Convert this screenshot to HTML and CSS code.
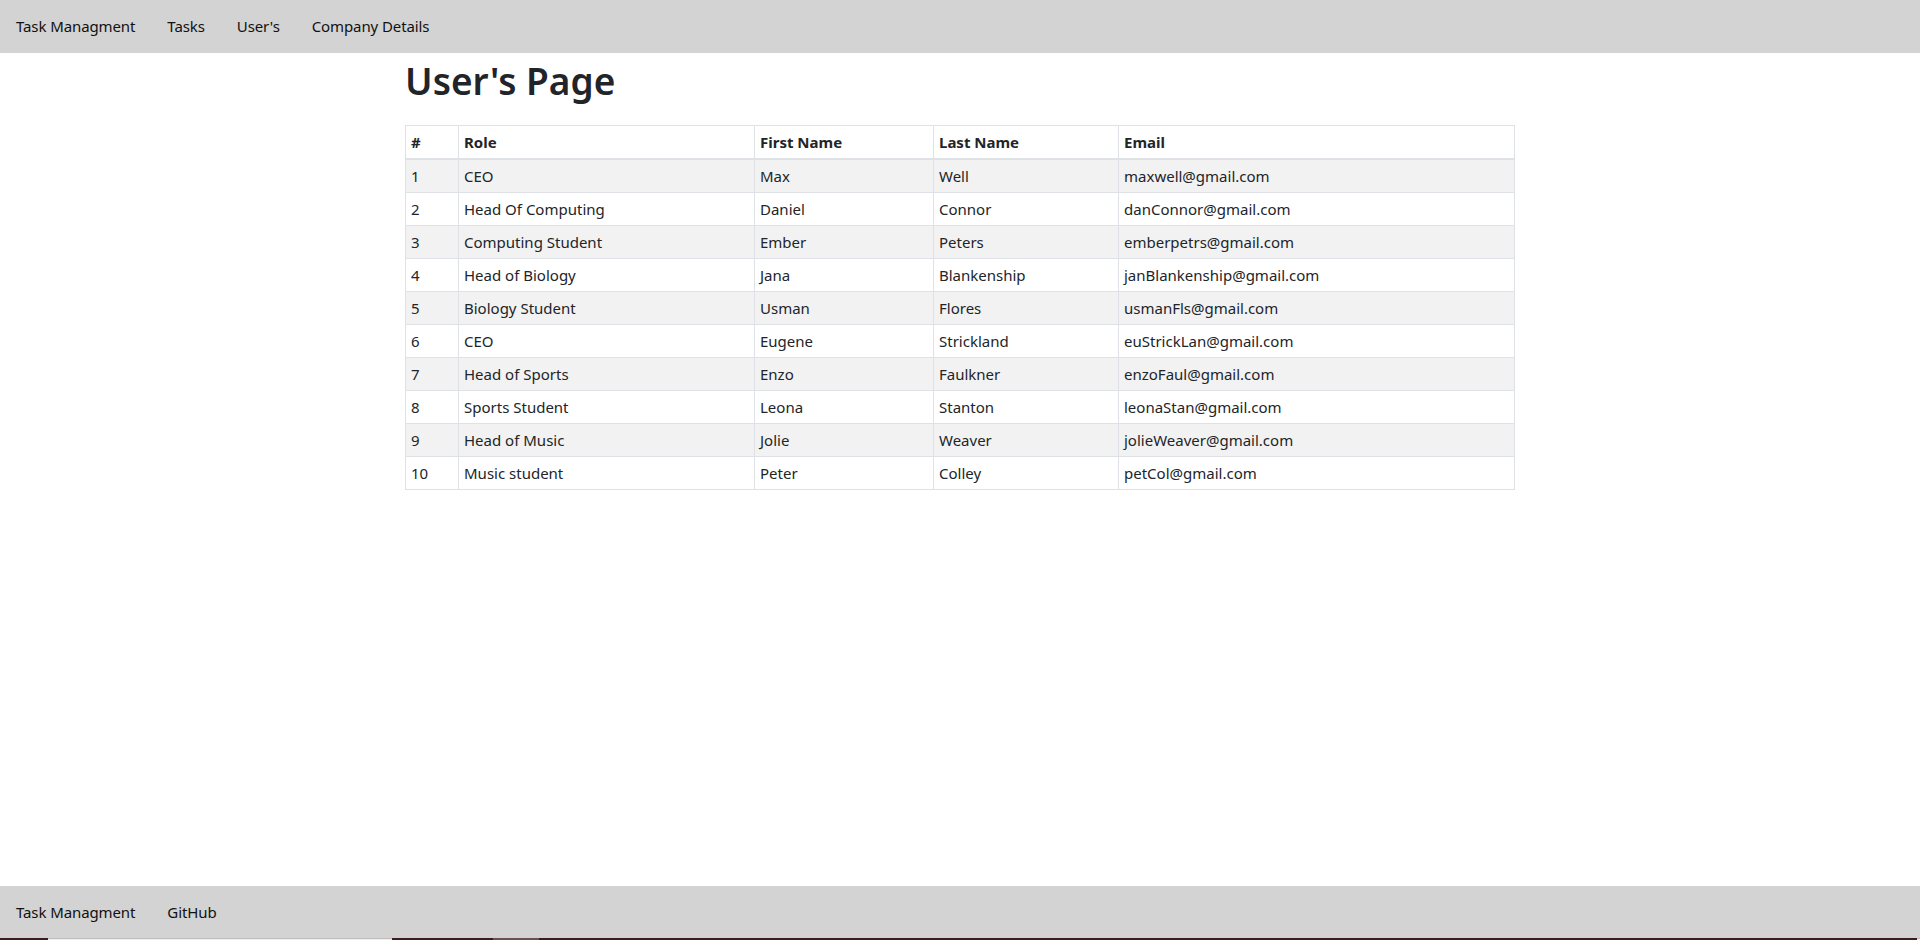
FILE: index.html
```html
<!DOCTYPE html>
<html lang="en">
<head>
<meta charset="utf-8">
<title>User's Page</title>
<link rel="stylesheet" href="styles.css">
</head>
<body>
<header class="topnav">
  <a class="nav-link" href="#">Task Managment</a>
  <a class="nav-link" href="#">Tasks</a>
  <a class="nav-link" href="#">User's</a>
  <a class="nav-link" href="#">Company Details</a>
</header>
<main class="container">
  <h1 class="page-title">User's Page</h1>
  <table class="users-table">
    <thead>
      <tr>
        <th class="col-num">#</th>
        <th class="col-role">Role</th>
        <th class="col-first">First Name</th>
        <th class="col-last">Last Name</th>
        <th class="col-email">Email</th>
      </tr>
    </thead>
    <tbody>
      <tr><td>1</td><td>CEO</td><td>Max</td><td>Well</td><td>maxwell@gmail.com</td></tr>
      <tr><td>2</td><td>Head Of Computing</td><td>Daniel</td><td>Connor</td><td>danConnor@gmail.com</td></tr>
      <tr><td>3</td><td>Computing Student</td><td>Ember</td><td>Peters</td><td>emberpetrs@gmail.com</td></tr>
      <tr><td>4</td><td>Head of Biology</td><td>Jana</td><td>Blankenship</td><td>janBlankenship@gmail.com</td></tr>
      <tr><td>5</td><td>Biology Student</td><td>Usman</td><td>Flores</td><td>usmanFls@gmail.com</td></tr>
      <tr><td>6</td><td>CEO</td><td>Eugene</td><td>Strickland</td><td>euStrickLan@gmail.com</td></tr>
      <tr><td>7</td><td>Head of Sports</td><td>Enzo</td><td>Faulkner</td><td>enzoFaul@gmail.com</td></tr>
      <tr><td>8</td><td>Sports Student</td><td>Leona</td><td>Stanton</td><td>leonaStan@gmail.com</td></tr>
      <tr><td>9</td><td>Head of Music</td><td>Jolie</td><td>Weaver</td><td>jolieWeaver@gmail.com</td></tr>
      <tr><td>10</td><td>Music student</td><td>Peter</td><td>Colley</td><td>petCol@gmail.com</td></tr>
    </tbody>
  </table>
</main>
<footer class="footnav">
  <a class="nav-link" href="#">Task Managment</a>
  <a class="nav-link" href="#">GitHub</a>
</footer>
<div class="edge-strip">
  <span class="seg seg-dark seg-a"></span>
  <span class="seg seg-light seg-b"></span>
  <span class="seg seg-dark seg-c"></span>
  <span class="seg seg-mid seg-d"></span>
  <span class="seg seg-dark seg-e"></span>
  <span class="seg seg-light seg-f"></span>
</div>
</body>
</html>
```
FILE: styles.css
```css
* { box-sizing: border-box; }

html, body {
  margin: 0;
  padding: 0;
  height: 100%;
}

body {
  font-family: "Segoe UI", "Noto Sans", "Open Sans", sans-serif;
  font-size: 15px;
  line-height: 1.5;
  color: #212529;
  background: #fff;
  display: flex;
  flex-direction: column;
  min-height: 100vh;
}

.topnav,
.footnav {
  display: flex;
  align-items: center;
  height: 53px;
  background: #d3d3d3;
  padding: 0;
  flex-shrink: 0;
}

.footnav { height: 52px; }

.nav-link {
  color: #111;
  text-decoration: none;
  padding: 0 16px 0 16px;
  font-size: 15px;
  letter-spacing: -0.1px;
}

.container {
  flex: 1;
  width: 1140px;
  margin: 0 auto;
  padding: 0 15px;
}

.page-title {
  font-size: 37px;
  font-weight: 600;
  line-height: 48px;
  margin: 4px 0 20px;
  color: #212529;
}

.users-table {
  width: 100%;
  border-collapse: collapse;
  table-layout: fixed;
  font-size: 15px;
}

.users-table th,
.users-table td {
  border: 1px solid #dee2e6;
  padding: 4px 5px;
  line-height: 24px;
  text-align: left;
  vertical-align: top;
}

.users-table th {
  font-weight: 700;
  vertical-align: bottom;
  border-bottom: 2px solid #dee2e6;
  padding-top: 4px;
  padding-bottom: 4px;
}

.users-table tbody td { padding-top: 4px; padding-bottom: 4px; }

.users-table tbody tr:nth-child(odd) { background: #f2f2f2; }

.col-num { width: 53px; }
.col-role { width: 296px; }
.col-first { width: 179px; }
.col-last { width: 185px; }
.col-email { width: auto; }

.edge-strip {
  display: flex;
  height: 2px;
  flex-shrink: 0;
}

.seg { display: block; height: 2px; }
.seg-dark { background: #3b1d1d; }
.seg-light { background: #eeeeee; border-top: 1px solid #bdbdbd; }
.seg-mid { background: #6a5050; }
.seg-a { width: 48px; }
.seg-b { width: 344px; }
.seg-c { width: 101px; }
.seg-d { width: 46px; }
.seg-e { flex: 1; }
.seg-f { width: 3px; }
```
